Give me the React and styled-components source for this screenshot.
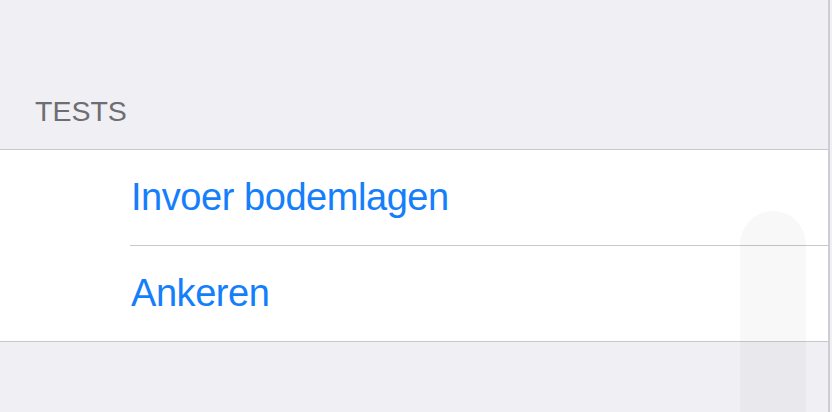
import styled, { createGlobalStyle } from "styled-components";

const GlobalStyle = createGlobalStyle`
  html, body {
    margin: 0;
    padding: 0;
    background: #efeff4;
  }
  body {
    font-family: "Liberation Sans", Arial, sans-serif;
    -webkit-font-smoothing: antialiased;
  }
`;

const Page = styled.div`
  position: relative;
  height: 412px;
  margin-right: 2px;
  border-right: 2px solid #cbcfd3;
  background: #efeff4;
  overflow: hidden;
`;

const SectionHeader = styled.div`
  height: 149px;
  display: flex;
  align-items: flex-end;
  padding: 0 0 21px 35px;
  box-sizing: border-box;
`;

const HeaderLabel = styled.span`
  font-size: 28.5px;
  color: #6d6d72;
  text-transform: uppercase;
`;

const Group = styled.div`
  background: #fff;
  border-top: 1px solid #c8c7cc;
  border-bottom: 1px solid #c8c7cc;
`;

const Row = styled.div`
  height: 95px;
  display: flex;
  align-items: center;
  padding-left: 131px;
  box-sizing: border-box;
  font-size: 38px;
  letter-spacing: -0.45px;
  color: #147efb;
`;

const Separator = styled.div`
  height: 1px;
  margin-left: 130px;
  background: #c8c7cc;
`;

const ScrollPill = styled.div`
  position: absolute;
  left: 740px;
  top: 211px;
  width: 66px;
  height: 240px;
  border-radius: 33px 33px 0 0;
  background: rgba(0, 0, 0, 0.028);
`;

function App() {
  const items = ["Invoer bodemlagen", "Ankeren"];

  return (
    <>
      <GlobalStyle />
      <Page>
        <SectionHeader>
          <HeaderLabel>Tests</HeaderLabel>
        </SectionHeader>
        <Group>
          {items.map((item, i) => (
            <div key={item}>
              {i > 0 && <Separator />}
              <Row>{item}</Row>
            </div>
          ))}
        </Group>
        <ScrollPill />
      </Page>
    </>
  );
}

export default App;
